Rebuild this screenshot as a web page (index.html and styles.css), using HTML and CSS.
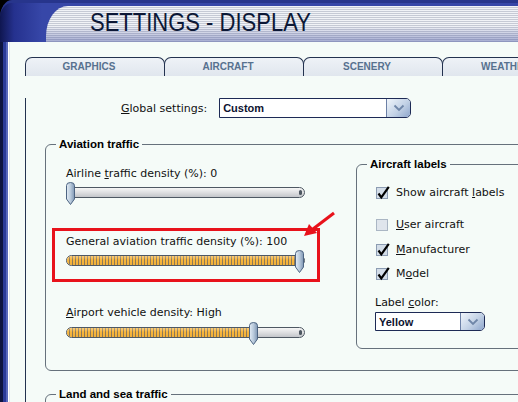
FILE: index.html
```html
<!DOCTYPE html>
<html>
<head>
<meta charset="utf-8">
<title>Settings - Display</title>
<link rel="stylesheet" href="styles.css">
</head>
<body>
<div class="window">
  <header class="titlebar">
    <div class="title-stripes"><h1 class="title">SETTINGS - DISPLAY</h1></div>
  </header>
  <div class="main">
    <div class="edge"></div>
    <div class="content">
      <nav class="tabs">
        <div class="tab">GRAPHICS</div>
        <div class="tab">AIRCRAFT</div>
        <div class="tab">SCENERY</div>
        <div class="tab">WEATHER</div>
      </nav>
      <div class="panel">
        <div class="global-row">
          <span class="global-label"><u>G</u>lobal settings:</span>
          <div class="combo combo-global">
            <span class="combo-text">Custom</span>
            <span class="combo-btn"><svg width="12" height="8" viewBox="0 0 12 8"><path d="M1.5 1.5 L6 6 L10.5 1.5" fill="none" stroke="#6f86a8" stroke-width="1.8"/></svg></span>
          </div>
        </div>

        <fieldset class="group group-aviation">
          <legend>Aviation traffic</legend>
          <div class="aviation-cols">
            <div class="sliders">
              <div class="slider-block block-airline">
                <div class="slider-label">Airline <u>t</u>raffic density (%): 0</div>
                <div class="slider">
                  <div class="track"><div class="fill" style="width:0%"></div></div>
                  <svg class="thumb" style="left:0px" width="9" height="23" viewBox="0 0 9 23"><defs><linearGradient id="tg1" x1="0" y1="0" x2="1" y2="0"><stop offset="0" stop-color="#e4edf6"/><stop offset="0.5" stop-color="#b9cadc"/><stop offset="1" stop-color="#7f97b4"/></linearGradient></defs><path d="M0.5 3.5 Q0.5 0.5 4.5 0.5 Q8.5 0.5 8.5 3.5 L8.5 17 L4.5 22.5 L0.5 17 Z" fill="url(#tg1)" stroke="#4d6482"/></svg>
                </div>
              </div>

              <div class="slider-block highlight">
                <div class="slider-label">General aviation traf<u>f</u>ic density (%): 100</div>
                <div class="slider">
                  <div class="track"><div class="fill" style="width:98%"></div></div>
                  <svg class="thumb" style="left:229px" width="9" height="23" viewBox="0 0 9 23"><defs><linearGradient id="tg2" x1="0" y1="0" x2="1" y2="0"><stop offset="0" stop-color="#e4edf6"/><stop offset="0.5" stop-color="#b9cadc"/><stop offset="1" stop-color="#7f97b4"/></linearGradient></defs><path d="M0.5 3.5 Q0.5 0.5 4.5 0.5 Q8.5 0.5 8.5 3.5 L8.5 17 L4.5 22.5 L0.5 17 Z" fill="url(#tg2)" stroke="#4d6482"/></svg>
                </div>
                <svg class="arrow" width="40" height="32" viewBox="0 0 40 32"><path d="M35 3 L14 19" stroke="#e8121b" stroke-width="3" fill="none"/><path d="M5 26 L10 14 L18 23 Z" fill="#e8121b"/></svg>
              </div>

              <div class="slider-block block-airport">
                <div class="slider-label"><u>A</u>irport vehicle density: High</div>
                <div class="slider">
                  <div class="track"><div class="fill" style="width:79%"></div></div>
                  <svg class="thumb" style="left:183px" width="9" height="23" viewBox="0 0 9 23"><defs><linearGradient id="tg3" x1="0" y1="0" x2="1" y2="0"><stop offset="0" stop-color="#e4edf6"/><stop offset="0.5" stop-color="#b9cadc"/><stop offset="1" stop-color="#7f97b4"/></linearGradient></defs><path d="M0.5 3.5 Q0.5 0.5 4.5 0.5 Q8.5 0.5 8.5 3.5 L8.5 17 L4.5 22.5 L0.5 17 Z" fill="url(#tg3)" stroke="#4d6482"/></svg>
                </div>
              </div>
            </div>

            <fieldset class="group group-labels">
              <legend>Aircraft labels</legend>
              <div class="labels-body">
                <div class="check-row row-show">
                  <svg class="cb" width="15" height="15" viewBox="0 0 15 15"><rect x="1.5" y="2.5" width="11" height="11" fill="#d3dde8" stroke="#8c9cb2"/><path d="M3.5 8.5 L6.3 12.3 L13.8 1.8" fill="none" stroke="#000" stroke-width="2.2"/></svg>
                  <span>Show aircraft <u>l</u>abels</span>
                </div>
                <div class="check-row row-user">
                  <svg class="cb" width="15" height="15" viewBox="0 0 15 15"><rect x="1.5" y="2.5" width="11" height="11" fill="#dfe5ec" stroke="#aab6c4"/></svg>
                  <span><u>U</u>ser aircraft</span>
                </div>
                <div class="check-row row-manu">
                  <svg class="cb" width="15" height="15" viewBox="0 0 15 15"><rect x="1.5" y="2.5" width="11" height="11" fill="#d3dde8" stroke="#8c9cb2"/><path d="M3.5 8.5 L6.3 12.3 L13.8 1.8" fill="none" stroke="#000" stroke-width="2.2"/></svg>
                  <span><u>M</u>anufacturer</span>
                </div>
                <div class="check-row row-model">
                  <svg class="cb" width="15" height="15" viewBox="0 0 15 15"><rect x="1.5" y="2.5" width="11" height="11" fill="#d3dde8" stroke="#8c9cb2"/><path d="M3.5 8.5 L6.3 12.3 L13.8 1.8" fill="none" stroke="#000" stroke-width="2.2"/></svg>
                  <span>M<u>o</u>del</span>
                </div>
                <div class="color-label">Label <u>c</u>olor:</div>
                <div class="combo combo-color">
                  <span class="combo-text">Yellow</span>
                  <span class="combo-btn"><svg width="12" height="8" viewBox="0 0 12 8"><path d="M1.5 1.5 L6 6 L10.5 1.5" fill="none" stroke="#6f86a8" stroke-width="1.8"/></svg></span>
                </div>
              </div>
            </fieldset>
          </div>
        </fieldset>

        <fieldset class="group group-land">
          <legend>Land and sea traffic</legend>
        </fieldset>
      </div>
    </div>
  </div>
</div>
</body>
</html>
```

FILE: styles.css
```css
* { box-sizing: border-box; }

body {
  margin: 0;
  background: #000;
  font-family: "DejaVu Sans", Verdana, sans-serif;
  font-size: 11px;
  color: #111;
}

.window {
  width: 518px;
  height: 402px;
  overflow: hidden;
  display: flex;
  flex-direction: column;
  background: #000;
}

/* ---------- title bar ---------- */
.titlebar {
  flex: 0 0 42px;
  display: flex;
  padding-top: 3px;
  border-top-left-radius: 12px 18px;
  background: linear-gradient(90deg, #0f1650 0, #25318e 14px, #3747a8 42px);
  border-top: 3px solid #27358c;
}

.title-stripes {
  flex: 1;
  margin-left: 46px;
  border-top-left-radius: 22px 30px;
  background:
    linear-gradient(180deg, rgba(255,255,255,0) 55%, rgba(70,82,160,0.45) 100%),
    repeating-linear-gradient(180deg, #f1f3f7 0 1px, #c6cad5 1px 2px);
}

.title {
  display: inline-block;
  margin: 0 0 0 44px;
  padding-top: 2px;
  font: 400 25px/28px "Liberation Sans", Arial, sans-serif;
  color: #0c1836;
  white-space: nowrap;
  transform: scaleX(0.88);
  transform-origin: left center;
}

/* ---------- main ---------- */
.main {
  flex: 1;
  display: flex;
  background: #f5fbf8;
}

.edge {
  flex: 0 0 10px;
  background: linear-gradient(90deg, #0d1440 0 3px, #2a3a98 3px 6px, #5868bc 6px 8px, #ffffff 8px 9px, #dfe6ee 9px 10px);
}

.content {
  flex: 1;
  min-width: 0;
}

/* ---------- tabs ---------- */
.tabs {
  display: flex;
  margin: 15px 0 0 15px;
  height: 19px;
  border-bottom: 1px solid #1c2a48;
  width: 600px;
}

.tab {
  flex: 0 0 140px;
  height: 19px;
  padding-right: 12px;
  border: 1px solid #23324f;
  border-bottom: none;
  border-radius: 7px 7px 0 0;
  margin-right: -1px;
  background: linear-gradient(180deg, #eef2f7 0, #e0e6ee 100%);
  color: #57718f;
  font: 700 10px/18px "Liberation Sans", Arial, sans-serif;
  text-align: center;
}

/* ---------- panel ---------- */
.panel {
  border-left: 1px solid #23324f;
  margin-left: 15px;
  height: 400px;
}

.global-row {
  display: flex;
  align-items: center;
  gap: 12px;
  margin: 22px 0 0 95px;
  height: 20px;
}

.combo {
  display: flex;
  border: 1px solid #1d2a55;
  border-radius: 0 5px 5px 0;
  background: #fff;
}

.combo-global { width: 192px; height: 20px; }
.combo-color { width: 110px; height: 19px; margin-top: 2px; }

.combo-text {
  flex: 1;
  padding-left: 3px;
  font: 700 11px/18px "Liberation Sans", Arial, sans-serif;
  color: #0d1330;
}

.combo-btn {
  flex: 0 0 24px;
  display: flex;
  align-items: center;
  justify-content: center;
  border-left: 1px solid #6c80a6;
  border-radius: 0 4px 4px 0;
  background: linear-gradient(135deg, #f0f5fb 0, #c3d2e6 55%, #8ea6cc 100%);
}

/* ---------- group boxes ---------- */
.group {
  margin: 0;
  padding: 0;
  border: 1px solid #66717c;
  border-radius: 6px;
  min-width: 0;
}

.group legend {
  margin-left: 10px;
  padding: 0 3px;
  font: 700 11.5px/13px "Liberation Sans", Arial, sans-serif;
  color: #000;
}

.group-aviation {
  margin: 20px 0 0 19px;
  width: 520px;
}

.aviation-cols {
  display: flex;
  padding: 0 0 21px 20px;
}

.sliders {
  flex: 0 0 290px;
  display: flex;
  flex-direction: column;
}

.slider-label {
  line-height: 14px;
  white-space: nowrap;
}

.block-airline { margin-top: 16px; }

.highlight {
  position: relative;
  margin: 23px 0 0 -14px;
  width: 268px;
  padding: 4px 0 6px 11px;
  border: 3px solid #e8121b;
}

.block-airport { margin-top: 24px; }

.slider {
  position: relative;
  width: 239px;
  height: 23px;
  margin-top: 1px;
}

.block-airport .slider { margin-top: 2px; }

.track {
  position: absolute;
  left: 0;
  right: 0;
  top: 5px;
  height: 11px;
  border: 1px solid #4e5863;
  border-radius: 6px;
  background: linear-gradient(180deg, #f6f6f6 0, #dedfe1 50%, #c3c6ca 100%);
  overflow: hidden;
}

.track::after {
  content: "";
  position: absolute;
  right: 2px;
  top: 2px;
  width: 3px;
  height: 5px;
  border-radius: 2px;
  background: #4d5761;
}

.fill {
  height: 100%;
  background:
    linear-gradient(180deg, rgba(255,255,255,0.3) 0, rgba(255,255,255,0) 45%, rgba(0,0,0,0.03) 100%),
    repeating-linear-gradient(90deg, #f8b63c 0 2px, #8f7a58 2px 3px);
}

.thumb {
  position: absolute;
  top: 0;
}

.arrow {
  position: absolute;
  left: 244px;
  top: -21px;
}

/* ---------- aircraft labels ---------- */
.group-labels {
  margin: 7px 0 0 0;
  width: 200px;
  align-self: flex-start;
}

.labels-body {
  padding: 0 0 17px 18px;
}

.check-row {
  display: flex;
  align-items: center;
  gap: 6px;
  height: 16px;
  white-space: nowrap;
}

.cb { flex: 0 0 15px; }

.row-show { margin-top: 13px; }
.row-user { margin-top: 16px; }
.row-manu { margin-top: 9px; }
.row-model { margin-top: 8px; }

.color-label {
  margin-top: 15px;
  line-height: 14px;
}

/* ---------- land and sea ---------- */
.group-land {
  margin: 17px 0 0 19px;
  width: 520px;
  height: 40px;
}
```
